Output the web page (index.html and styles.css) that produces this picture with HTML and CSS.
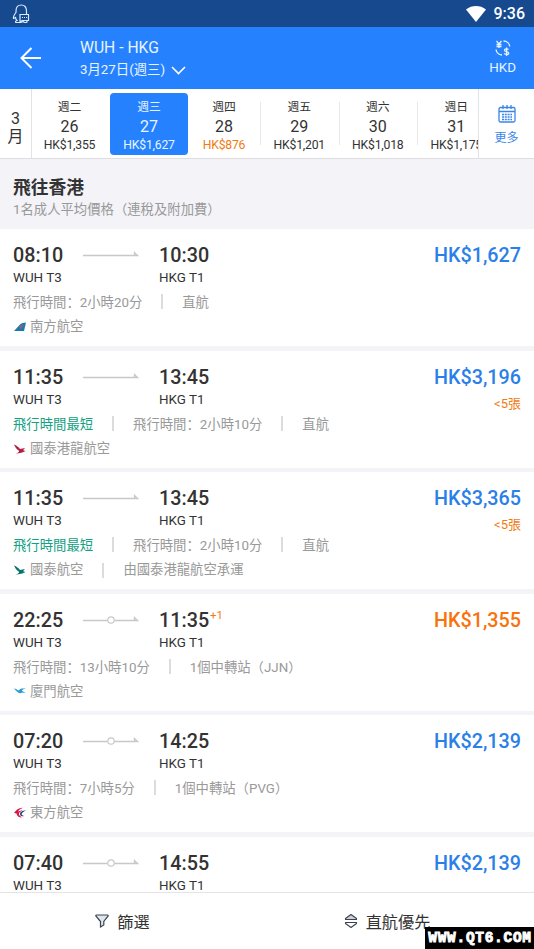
FILE: index.html
```html
<!DOCTYPE html>
<html lang="zh-Hans">
<head>
<meta charset="utf-8">
<title>WUH - HKG</title>
<link rel="stylesheet" href="styles.css">
</head>
<body>
<svg width="0" height="0" class="defs">
  <symbol id="direct" viewBox="0 0 56 12"><path d="M0 6.500H54.500L51.500 3.500V6" fill="none" stroke="#c8c8c8" stroke-width="1.300"/></symbol>
  <symbol id="stop" viewBox="0 0 56 12"><path d="M0 6.500H24.500M31.500 6.500H54.500L51.500 3.500V6" fill="none" stroke="#c8c8c8" stroke-width="1.300"/><circle cx="28" cy="6" r="3.200" fill="none" stroke="#c8c8c8" stroke-width="1.200"/></symbol>
  <symbol id="wing" viewBox="0 0 12 12"><path d="M0 1.500C2.500 2.500 4.500 4 6 6L11 5L9 7.200L11.500 8C9 9.300 6 10.500 1.500 10.500C4 9.800 5.500 9 5 7.800C2.500 6 1 4 0 1.500Z"/></symbol>
</svg>
<div class="screen">
  <div class="status">
    <svg width="18" height="20" viewBox="0 0 18 20" fill="none" stroke="#d5ecff" stroke-width="1.200"><path d="M14.500 10V7C14.500 3 12.500 1 9.300 1S4 3 4 7V8.500C2 11 1 13 1.500 14.500L3.500 13.500C3.500 15 4.500 16 5 16.500C3.500 17 3 18 4 18.500H9L11 17.500C12 18.500 14 18.800 15 18V16.500"/><path d="M8 10.500H16.500V16.500H10L8 18Z"/><path d="M10 13.500H15" stroke-dasharray="1 1"/></svg>
    <div class="status-right">
      <svg width="20" height="16" viewBox="0 0 20 16"><path d="M0 3.500C6-1.100 14-1.100 20 3.500L10 16Z" fill="#fff"/></svg>
      <span>9:36</span>
    </div>
  </div>
  <header class="header">
    <svg class="back" width="22" height="22" viewBox="0 0 22 22" fill="none" stroke="#fff" stroke-width="2"><path d="M21 11H1.500M11.500 1L1.500 11L11.500 21"/></svg>
    <div class="route">
      <div class="route-name">WUH - HKG</div>
      <div class="route-date"><span>3月27日(週三)</span><svg width="15" height="9" viewBox="0 0 15 9" fill="none" stroke="#fff" stroke-width="1.600"><path d="M1 1L7.500 7.500L14 1"/></svg></div>
    </div>
    <div class="currency">
      <svg width="16" height="16" viewBox="0 0 16 16" fill="none" stroke="#e6f3ff" stroke-width="1.300"><path d="M1.500 1L4 4L6.500 1M4 4V8M1.500 4.500H6.500M1.500 6.500H6.500"/><path d="M8.500 1C12 1 14.500 3.500 14.800 6.500M1 9.500C1.500 12.500 3.500 14.800 7 15"/><path d="M13.500 9.500C12.500 8.500 9.500 8.500 9.500 10.200S13.700 11.500 13.700 13.200S10.500 14.800 9.200 13.600M11.600 7.500V16"/></svg>
      <span>HKD</span>
    </div>
  </header>
  <nav class="dates">
    <div class="month"><span>3</span><span>月</span></div>
    <div class="days">
      <div class="day first"><span>週二</span><b>26</b><i>HK$1,355</i></div>
      <div class="day selected"><span>週三</span><b>27</b><i>HK$1,627</i></div>
      <div class="day narrow low"><span>週四</span><b>28</b><i>HK$876</i></div>
      <div class="day line"><span>週五</span><b>29</b><i>HK$1,201</i></div>
      <div class="day line"><span>週六</span><b>30</b><i>HK$1,018</i></div>
      <div class="day line"><span>週日</span><b>31</b><i>HK$1,175</i></div>
    </div>
    <div class="more">
      <svg width="18" height="18" viewBox="0 0 18 18" fill="none" stroke="#3a85ea" stroke-width="1.300"><rect x="1" y="2.500" width="16" height="14.500" rx="1.500"/><path d="M1 6.500H17M5 0V4M9 0V4M13 0V4"/><path d="M4 9.500H14M4 12H14M4 14.500H14" stroke-width="1.500" stroke-dasharray="2 .8"/></svg>
      <span>更多</span>
    </div>
  </nav>
  <section class="heading"><h1>飛往香港</h1><p>1名成人平均價格（連稅及附加費）</p></section>
  <main class="flights">
    <article class="flight">
      <div class="times"><span class="dep">08:10</span><svg width="56" height="12"><use href="#direct"/></svg><span class="arr">10:30</span><strong>HK$1,627</strong></div>
      <div class="codes"><span>WUH T3</span><span>HKG T1</span></div>
      <div class="meta"><span>飛行時間：2小時20分</span><span>直航</span></div>
      <div class="airline"><svg width="12" height="12" viewBox="0 0 12 12"><path d="M0 10L6.500 3Q8 1.500 12 1.500L10 10Z" fill="#157da8"/><path d="M5 7C6 4 8 3 10 4L7 8Z" fill="#a4558c"/></svg><span>南方航空</span></div>
    </article>
    <article class="flight">
      <div class="times"><span class="dep">11:35</span><svg width="56" height="12"><use href="#direct"/></svg><span class="arr">13:45</span><strong>HK$3,196</strong></div>
      <div class="codes"><span>WUH T3</span><span>HKG T1</span><em>&lt;5張</em></div>
      <div class="meta"><span class="best">飛行時間最短</span><span>飛行時間：2小時10分</span><span>直航</span></div>
      <div class="airline"><svg width="12" height="12" fill="#b31e43"><use href="#wing"/></svg><span>國泰港龍航空</span></div>
    </article>
    <article class="flight">
      <div class="times"><span class="dep">11:35</span><svg width="56" height="12"><use href="#direct"/></svg><span class="arr">13:45</span><strong>HK$3,365</strong></div>
      <div class="codes"><span>WUH T3</span><span>HKG T1</span><em>&lt;5張</em></div>
      <div class="meta"><span class="best">飛行時間最短</span><span>飛行時間：2小時10分</span><span>直航</span></div>
      <div class="airline"><svg width="12" height="12" fill="#08756b"><use href="#wing"/></svg><span>國泰航空</span><span>由國泰港龍航空承運</span></div>
    </article>
    <article class="flight">
      <div class="times"><span class="dep">22:25</span><svg width="56" height="12"><use href="#stop"/></svg><span class="arr">11:35<sup>+1</sup></span><strong class="cheap">HK$1,355</strong></div>
      <div class="codes"><span>WUH T3</span><span>HKG T1</span></div>
      <div class="meta"><span>飛行時間：13小時10分</span><span>1個中轉站（JJN）</span></div>
      <div class="airline"><svg width="12" height="12" viewBox="0 0 12 12" fill="#2b9cd3"><path d="M0 2.500C2 2.500 3 4 5 4.500C6 2.500 8 2 12 3C9.500 3 8 3.500 8 4.700L11.500 7L8 6.500C6 8.500 3.500 6.500 0 2.500Z"/></svg><span>廈門航空</span></div>
    </article>
    <article class="flight">
      <div class="times"><span class="dep">07:20</span><svg width="56" height="12"><use href="#stop"/></svg><span class="arr">14:25</span><strong>HK$2,139</strong></div>
      <div class="codes"><span>WUH T3</span><span>HKG T1</span></div>
      <div class="meta"><span>飛行時間：7小時5分</span><span>1個中轉站（PVG）</span></div>
      <div class="airline"><svg width="12" height="12" viewBox="0 0 12 12"><path d="M0 6C2 3 5 .5 9 .8C6 2 5 3 4 4.500L9 3C6 4.500 4.500 6 5 8L8 10.500C4.500 10.500 3 9 2.500 6.500Z" fill="#d71945"/><path d="M12 3.500C8.500 3.500 6 5 6 7S8 9.500 10 9C8.200 8.500 7.500 7.800 7.700 6.800S9.500 4.500 12 3.500Z" fill="#253b80"/></svg><span>東方航空</span></div>
    </article>
    <article class="flight">
      <div class="times"><span class="dep">07:40</span><svg width="56" height="12"><use href="#stop"/></svg><span class="arr">14:55</span><strong>HK$2,139</strong></div>
      <div class="codes"><span>WUH T3</span><span>HKG T1</span></div>
    </article>
  </main>
  <footer class="toolbar">
    <div class="tool"><svg width="14" height="14" viewBox="0 0 14 14" fill="#dfe5ef" stroke="#3c4452" stroke-width="1.200"><path d="M1.500 1H12.500Q13.500 1 13 2.200L8.800 7.500V11L5.500 13V7.500L1 2.200Q.5 1 1.500 1Z"/></svg><span>篩選</span></div>
    <div class="tool sort"><svg width="14" height="16" viewBox="0 0 14 16" stroke="#3c4452" stroke-width="1.100" stroke-linejoin="round"><path d="M7 1.500L12.500 5.500V6.500H1.500V5.500Z" fill="#cbd1dc"/><path d="M1.500 9.500H12.500V10.500L7 14.500L1.500 10.500Z" fill="#fff"/></svg><span>直航優先</span></div>
  </footer>
  <div class="watermark">WWW.QT6.COM</div>
</div>
</body>
</html>
```
FILE: styles.css
```css
* { box-sizing: border-box; }
body { margin: 0; font-family: Roboto, "Noto Sans CJK SC", sans-serif; color: #333; background: #fff; }
.defs { position: absolute; }
.screen { position: relative; width: 534px; height: 949px; overflow: hidden; display: flex; flex-direction: column; }
svg { flex: none; display: block; }
span { white-space: nowrap; }

.status { height: 27px; flex: none; background: #16498d; display: flex; justify-content: space-between; align-items: center; padding: 0 9px 0 12px; }
.status-right { display: flex; align-items: center; gap: 8px; color: #fff; font-size: 16px; font-weight: 500; line-height: 28px; }
.header { height: 62px; flex: none; background: #2681ff; color: #e8f5ff; display: flex; padding: 0 18px 0 20px; }
.back { margin-top: 20px; }
.route { margin-left: 38px; padding-top: 10px; }
.route-name { font-size: 15.700px; line-height: 22px; }
.route-date { display: flex; align-items: center; gap: 6px; font-size: 13.35px; line-height: 21px; }
.route-date svg { margin-top: 1px; }
.currency { margin-left: auto; padding-top: 13px; display: flex; flex-direction: column; align-items: center; font-size: 13.4px; line-height: 17px; gap: 3px; }

.dates { height: 70px; flex: none; display: flex; border-bottom: 1px solid #dedee2; }
.month { width: 32px; flex: none; border-right: 1px solid #e3e3e5; display: flex; flex-direction: column; align-items: center; justify-content: center; font-size: 16px; line-height: 18px; padding-top: 9px; }
.days { width: 446px; flex: none; display: flex; overflow: hidden; }
.day { position: relative; width: 78.500px; flex: none; padding-top: 8px; display: flex; flex-direction: column; align-items: center; font-size: 11.8px; line-height: 20px; }
.day b { font-weight: 400; font-size: 16px; line-height: 20px; }
.day i { font-style: normal; font-size: 12.2px; line-height: 17px; letter-spacing: -.2px; }
.day.first { width: 78px; padding-right: 3px; }
.day.selected { width: 78px; height: 62px; margin-top: 4px; padding-top: 4px; border-radius: 4px; background: #2681ff; color: #e8f5ff; }
.day.narrow { width: 72px; }
.day.low i { color: #f17b13; }
.day.line { background: linear-gradient(#e8e8ea, #e8e8ea) 0 13px / 1px 43px no-repeat; }
.more { flex: 1; border-left: 1px solid #e3e3e5; display: flex; flex-direction: column; align-items: center; padding-top: 16px; gap: 6px; color: #3a85ea; font-size: 12px; line-height: 18px; }

.heading { height: 70px; flex: none; background: #f3f3f8; padding: 17px 13px 0; }
.heading h1 { margin: 0; font-size: 17.8px; line-height: 23px; font-weight: 700; }
.heading p { margin: 0; font-size: 13.35px; line-height: 22px; color: #999; }

.flights { height: 663px; flex: none; overflow: hidden; background: #f3f3f8; display: flex; flex-direction: column; gap: 4.600px; }
.flight { height: 117px; flex: none; background: #fff; padding: 12px 13px 0; }
.times { height: 28px; display: flex; align-items: center; font-size: 19.75px; line-height: 29px; font-weight: 500; }
.times > span, .times strong { padding-top: 1px; }
.dep { width: 70px; }
.arr { position: relative; margin-left: 20px; }
.arr sup { position: absolute; left: 51px; top: 3px; font-size: 11.5px; line-height: 14px; font-weight: 400; color: #f17b13; }
.times strong { margin-left: auto; color: #2b7fe8; font-weight: 500; }
.times .cheap { color: #f9720b; }
.codes { height: 18px; display: flex; font-size: 13.4px; line-height: 18px; }
.codes span { width: 146px; }
.codes em { margin: 3px 0 0 auto; font-style: normal; font-size: 13px; line-height: 19px; color: #f17b13; }
.meta { height: 29px; display: flex; align-items: center; font-size: 13.35px; color: #999; }
.meta .best { color: #12a182; }
.meta span + span, .airline span + span { display: flex; align-items: center; }
.meta span + span::before, .airline span + span::before { content: ""; width: 2px; height: 15px; margin: 0 19px; background: #dcdcdc; }
.airline { height: 22px; display: flex; align-items: center; gap: 4px; font-size: 13.35px; line-height: 22px; color: #999; }
.airline svg { margin-left: 1px; }
.airline span + span { margin-left: -4px; }

.toolbar { flex: 1; border-top: 1px solid #e4e4e6; background: #fff; display: flex; }
.tool { width: 245px; display: flex; align-items: center; justify-content: center; gap: 8px; font-size: 16.2px; }
.tool.sort { width: 284px; }
.watermark { position: absolute; right: 0; bottom: 0; width: 109px; height: 22px; padding-left: 1px; background: #000; color: #fff; font: 700 14.500px/23px "Liberation Sans Narrow", "Liberation Mono", monospace; text-align: center; letter-spacing: .7px; white-space: nowrap; -webkit-text-stroke: .9px #fff; }
```
